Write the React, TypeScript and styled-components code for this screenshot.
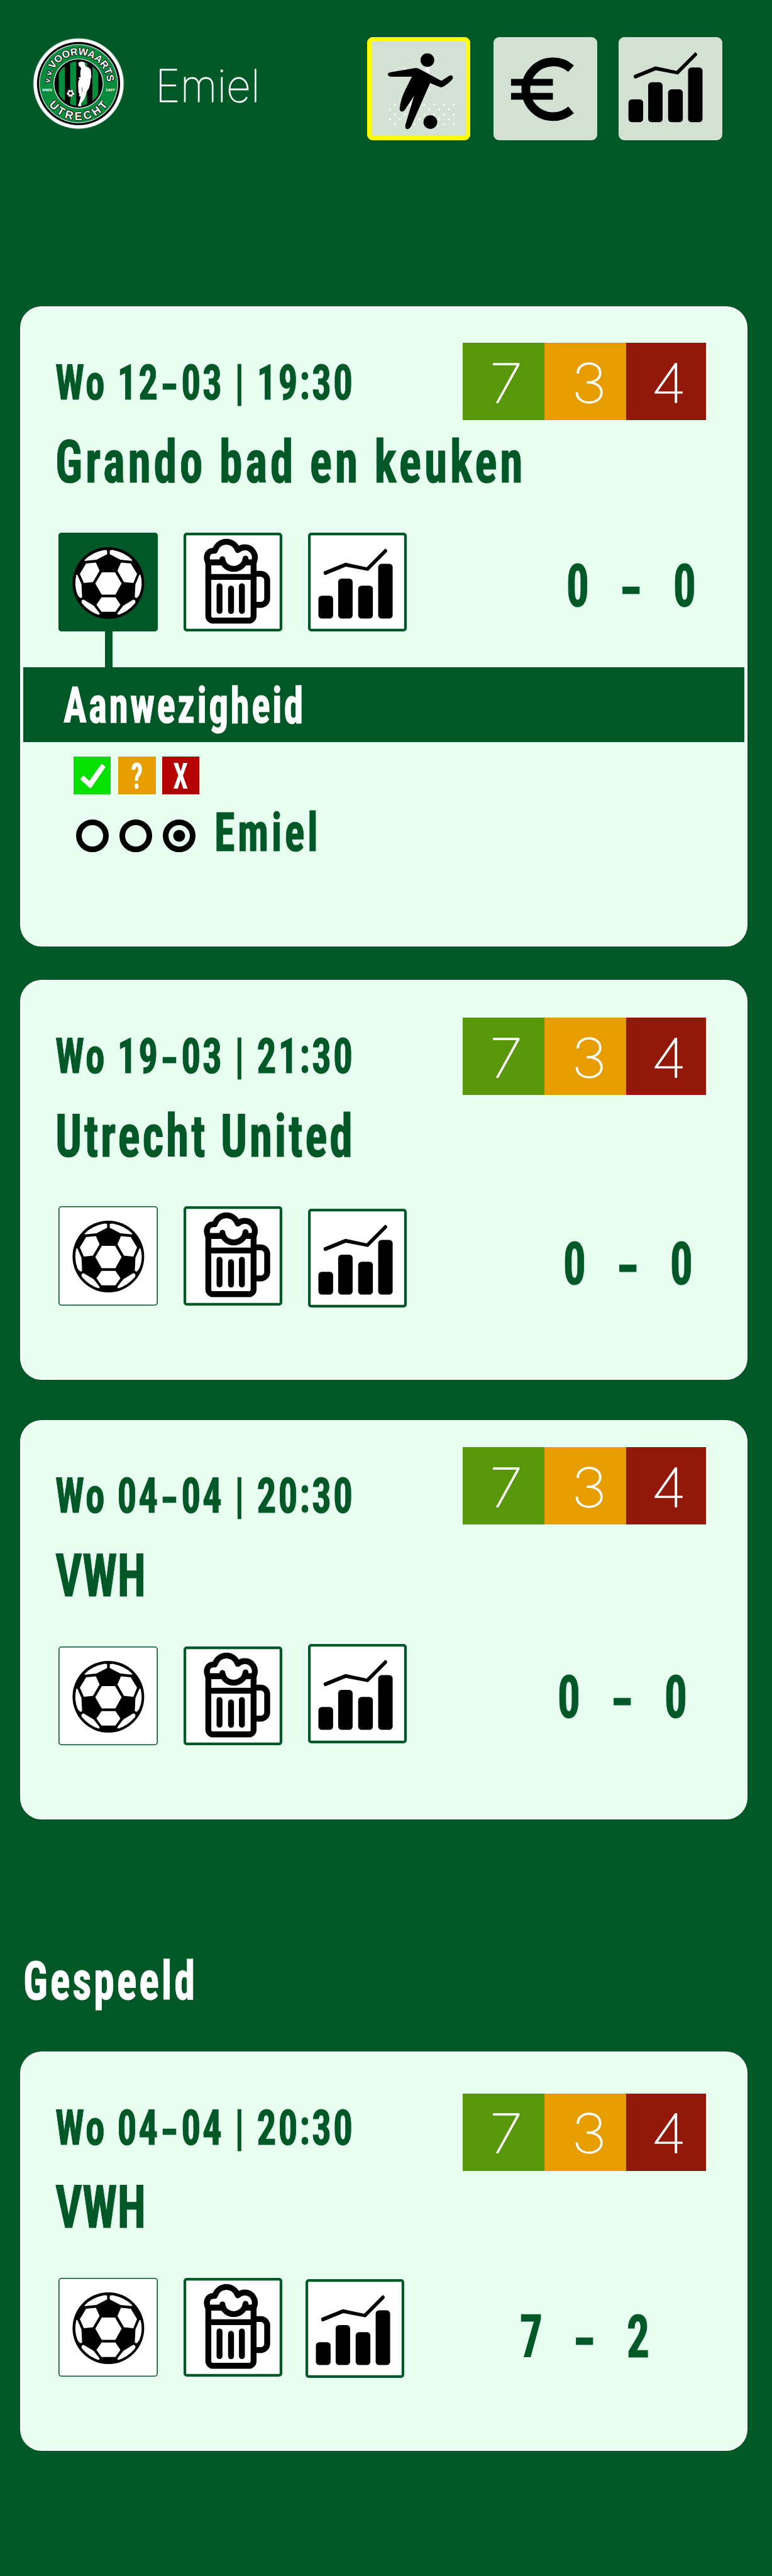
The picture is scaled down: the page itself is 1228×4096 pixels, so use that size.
import React from "react";
import styled, { createGlobalStyle } from "styled-components";

const green = "#005827";
const mint = "#e8fef1";
const condensed = `"Roboto Condensed", "Liberation Sans", sans-serif`;
const thin = `Inter, "Liberation Sans", sans-serif`;

const GlobalStyle = createGlobalStyle`
  * { box-sizing: border-box; }
  body { margin: 0; background: ${green}; }
`;

const Page = styled.main`
  width: 1228px;
  height: 4096px;
  background: ${green};
  color: ${green};
  font-family: ${condensed};
  overflow: hidden;
`;

/* ---------- text ---------- */

const Label = styled.span<{ $size: number; $tracking: number }>`
  display: block;
  font-family: ${condensed};
  font-weight: 700;
  font-size: ${(p) => p.$size}px;
  line-height: 1;
  letter-spacing: ${(p) => p.$tracking}px;
  white-space: nowrap;
  -webkit-text-stroke: 1px currentColor;
  transform: scaleX(0.78);
  transform-origin: 0 50%;
`;

const DateDash = styled.span`
  display: inline-block;
  width: 39.7px;
  margin-right: 3.8px;
  letter-spacing: 0;
  text-align: center;
  transform: translateY(3px) scaleX(1.4);
`;

/* ---------- header ---------- */

const Header = styled.header`
  display: flex;
  align-items: flex-start;
  height: 487px;
  padding: 48px 79.4px 0 42px;
`;

const LogoSvg = styled.svg`
  flex: none;
  width: 167.9px;
  height: 167.9px;
`;

const UserName = styled.span`
  margin: 54.4px 0 0 37.6px;
  font-family: ${thin};
  font-weight: 100;
  font-size: 70.7px;
  line-height: 1;
  color: #fff;
  -webkit-text-stroke: 1.1px #fff;
  transform: scaleX(0.96);
  transform-origin: 0 50%;
`;

const Nav = styled.nav`
  display: grid;
  grid-template-columns: 201.7px 198.9px 164.3px;
  margin: 10.8px 0 0 auto;
`;

const NavButton = styled.button<{ $active?: boolean }>`
  width: 164.3px;
  height: 164.3px;
  padding: 0;
  border: 0;
  border-radius: 9px;
  background: #d3e1d3;
  box-shadow: ${(p) => (p.$active ? "inset 0 0 0 7px #ffff00" : "none")};
`;

const Icon = styled.svg`
  display: block;
  width: 100%;
  height: 100%;
`;

/* ---------- match card ---------- */

const Card = styled.section<{ $height: number; $gap: number }>`
  display: flex;
  flex-direction: column;
  width: 1156.8px;
  height: ${(p) => p.$height}px;
  margin: ${(p) => p.$gap}px 0 0 32.4px;
  border: 2px solid #fff;
  border-radius: 34.5px;
  background: ${mint};
`;

const CardTop = styled.div`
  display: flex;
  flex: none;
  align-items: flex-start;
  height: 358.2px;
  padding-right: 64.1px;
`;

const Heading = styled.div`
  display: flex;
  flex: 1 1 0;
  flex-direction: column;
  gap: 41.1px;
  min-width: 0;
  padding: 79.8px 0 0 53.9px;
`;

const Badges = styled.div<{ $top: number }>`
  display: grid;
  flex: none;
  grid-template-columns: 130.1px 130.1px 127px;
  height: 122.9px;
  margin-top: ${(p) => p.$top}px;
`;

const Badge = styled.div<{ $color: string; $inset: number }>`
  padding: 21.6px 0 0 ${(p) => p.$inset}px;
  background: ${(p) => p.$color};
`;

const BadgeDigit = styled.span`
  display: block;
  font-family: ${thin};
  font-weight: 100;
  font-size: 85.7px;
  line-height: 1;
  color: #fff;
  -webkit-text-stroke: 1.4px #fff;
  transform: scaleX(1.12);
  transform-origin: 0 50%;
`;

const Actions = styled.div<{ $end: number }>`
  display: flex;
  flex: none;
  align-items: flex-start;
  gap: 41px;
  height: 157.2px;
  padding: 0 ${(p) => p.$end}px 0 59.1px;
`;

const ActionButton = styled.button<{ $line: number; $active?: boolean; $dx?: number; $dy?: number }>`
  flex: none;
  width: 157.2px;
  height: 157.2px;
  margin: ${(p) => p.$dy ?? 0}px 0 0 ${(p) => p.$dx ?? 0}px;
  padding: 0;
  border: 0;
  border-radius: 5px;
  background: ${(p) => (p.$active ? green : "#fff")};
  box-shadow: inset 0 0 0 ${(p) => p.$line}px ${green};
`;

const Score = styled.div<{ $top: number }>`
  display: grid;
  grid-template-columns: repeat(3, 28.3px);
  gap: 56.7px;
  justify-items: center;
  margin: ${(p) => p.$top}px 0 0 auto;
  font-weight: 700;
  font-size: 94.6px;
  line-height: 1;
  -webkit-text-stroke: 1px currentColor;
`;

const Goals = styled.span`
  transform: scaleX(0.76);
`;

const ScoreDash = styled.span`
  transform: translateY(4px) scaleX(1.16);
`;

/* ---------- attendance ---------- */

const Connector = styled.div`
  flex: none;
  width: 12px;
  height: 56.6px;
  margin-left: 132.9px;
  background: ${green};
`;

const SectionBar = styled.div`
  flex: none;
  height: 119.5px;
  margin: 0 3.7px 0 2.6px;
  padding: 21.8px 0 0 64.1px;
  background: ${green};
  color: #fff;
`;

const Statuses = styled.div`
  display: grid;
  flex: none;
  grid-template-columns: 71.5px 69.6px 59.3px;
  margin: 23px 0 0 82.5px;
`;

const Status = styled.div<{ $color: string }>`
  display: flex;
  justify-content: center;
  width: 59.3px;
  height: 59.4px;
  background: ${(p) => p.$color};
  color: #fff;
  font-weight: 700;
  font-size: 57.7px;
  line-height: 1;
`;

const StatusMark = styled.span`
  padding-top: 2.8px;
  transform: scaleX(0.74);
`;

const PlayerRow = styled.div`
  display: flex;
  flex: none;
  gap: 17.3px;
  margin: 19.4px 0 0 86.3px;
`;

const Radio = styled.span<{ $checked?: boolean }>`
  flex: none;
  width: 52px;
  height: 52px;
  margin-top: 20.3px;
  border: 9.6px solid #000;
  border-radius: 50%;
  background: ${(p) => (p.$checked ? "radial-gradient(circle, #000 9px, transparent 9.8px)" : "transparent")};
`;

const PlayerName = styled.div`
  margin-left: 12.2px;
`;

const SectionTitle = styled.h2`
  height: 368.8px;
  margin: 0;
  padding: 215px 0 0 37.4px;
  color: #fff;
`;

/* ---------- drawings ---------- */

const Logo = () => (
  <LogoSvg viewBox="0 0 840 840">
    <defs>
      <path id="topArc" d="M187 425 A228 228 0 0 1 643 425" />
      <path id="bottomArc" d="M125 425 A290 290 0 0 0 705 425" />
      <clipPath id="inner"><circle cx="415" cy="425" r="178" /></clipPath>
    </defs>
    <circle cx="415" cy="425" r="363" fill="#fff" opacity=".3" />
    <circle cx="415" cy="425" r="358" fill="#fff" />
    <circle cx="415" cy="425" r="331" fill="#000" />
    <circle cx="415" cy="425" r="314" fill="#fff" />
    <circle cx="415" cy="425" r="309" fill="#078c3e" />
    <circle cx="415" cy="425" r="199" fill="#fff" />
    <circle cx="415" cy="425" r="193" fill="#000" />
    <g clipPath="url(#inner)" fill="#078c3e">
      <path d="M258 230h47v400h-47zM348 230h47v400h-47zM436 230h47v400h-47zM525 230h47v400h-47z" />
    </g>
    <path
      fill="#fff"
      d="M414 262C420 250 446 247 458 255C468 263 464 276 473 290C490 292 508 300 513 320L517 370C514 384 507 392 509 408C510 425 502 440 500 455C493 474 481 482 476 500C474 520 466 536 457 555L436 580C432 590 438 600 434 606C424 608 414 606 411 600C412 586 421 578 422 566C426 552 430 540 431 528L417 524L423 512C414 496 412 482 414 466C410 446 412 424 414 404L424 390L416 387L417 376L432 374C428 352 427 330 435 308L431 294C418 290 412 276 414 262Z"
    />
    <path d="M444 448L447 500L441 470Z" fill="#000" />
    <circle cx="351" cy="502" r="29" fill="#fff" />
    <circle cx="351" cy="502" r="12" fill="#000" />
    <path d="M341 473h19l-9 8zM321 496l10-14 3 12zM372 482l9 14-13-2zM325 516l12 1-4 11zM377 516l-12 1 5 11zM345 531l6-8 6 8z" fill="#000" />
    <g fill="#fff" stroke="#000" strokeWidth="9" paintOrder="stroke" strokeLinejoin="round" fontFamily="Liberation Sans, sans-serif" fontWeight="700">
      <text fontSize="80">
        <textPath href="#topArc" startOffset="3"><tspan fontSize="62" letterSpacing="5">v.v.</tspan><tspan letterSpacing="0.6">VOORWAARTS</tspan></textPath>
      </text>
      <text fontSize="90" textAnchor="middle" letterSpacing="20">
        <textPath href="#bottomArc" startOffset="51%">UTRECHT</textPath>
      </text>
    </g>
    <g fill="#fff" fontFamily="Liberation Sans, sans-serif" fontWeight="700" fontSize="30" textAnchor="middle">
      <text x="165" y="484" textLength="80" lengthAdjust="spacingAndGlyphs">SINDS</text>
      <text x="667" y="484" textLength="76" lengthAdjust="spacingAndGlyphs">1907</text>
    </g>
  </LogoSvg>
);

const sparkles = [
  [165, 652], [228, 640], [284, 652], [324, 652], [364, 652], [404, 652],
  [145, 690], [304, 690], [344, 690], [384, 690],
  [165, 730], [205, 730], [284, 730], [324, 730], [364, 730], [404, 730],
  [145, 768], [185, 768], [265, 768], [344, 768], [384, 768],
  [165, 807], [245, 807], [364, 807], [404, 807], [205, 365], [304, 535],
];

const PlayerIcon = () => (
  <Icon viewBox="52 114 420 822" preserveAspectRatio="none">
    <defs>
      <pattern id="dots" x="130" y="215" width="13.3" height="39" patternUnits="userSpaceOnUse">
        <path d="M7.5 1h3v8h-3zM.5 20h3v8h-3z" fill="#e6ebe6" />
      </pattern>
    </defs>
    <rect x="130" y="215" width="278" height="662" fill="url(#dots)" />
    {sparkles.map(([x, y]) => (
      <path key={`${x}-${y}`} d={`M${x} ${y - 14}l2 11 5 3-5 3-2 11-2-11-5-3 5-3z`} fill="#fff" />
    ))}
    <path d="M289 350h17v55l-17-28zM243 580l-22 78 10 12z" fill="#f4f6f4" />
    <ellipse cx="297" cy="297" rx="28" ry="54" />
    <ellipse cx="309" cy="790" rx="28" ry="54" />
    <path d="M146 394L246 361C254 360 260 362 267 370L354 462L387 421C395 410 404 428 400 444C394 464 378 488 362 508C356 516 350 514 345 509L308 479L232 818C228 836 222 847 214 846C207 844 206 828 208 810L243 580L206 690C200 708 192 711 187 700C183 692 184 680 185 668C190 610 200 560 210 522L234 429H152C144 430 137 424 136 412C136 402 140 396 146 394Z" />
  </Icon>
);

const EuroIcon = () => (
  <Icon viewBox="0 0 273.7 274" fill="none" stroke="#000">
    <path d="M205.6 83.6A72.5 72.5 0 1 0 205.6 193" strokeWidth="23" />
    <path d="M46.4 120H157.4M46.4 157H157.4" strokeWidth="18" />
  </Icon>
);

const ChartIcon = ({ box = "1062 99 410 786" }: { box?: string }) => (
  <Icon viewBox={box} preserveAspectRatio="none">
    <rect x="1105" y="600" width="61" height="182" rx="14" ry="27" />
    <rect x="1187" y="464" width="60" height="318" rx="14" ry="27" />
    <rect x="1270" y="520" width="61" height="262" rx="14" ry="27" />
    <rect x="1353" y="346" width="60" height="436" rx="14" ry="27" />
    <path d="M1129 407L1217 338L1305 374L1379 232Q1383 221 1387 232Q1393 240 1390 250L1311 403L1219 369L1134 435Q1129 435 1127 425Q1125 414 1129 407Z" />
  </Icon>
);

const BallIcon = () => (
  <Icon viewBox="0 27 786 786">
    <circle cx="397" cy="427" r="285" />
    <path
      fill="#fff"
      d="M345 342H450L502 431L453 519H344L293 431ZM343 541H453L493 599L453 656H342L302 599ZM220 272L298 264L327 330L274 420L202 427L170 354ZM575 272L497 264L469 330L521 420L596 427L625 354ZM365 165Q387 165 387 172V198L302 242L215 251Q204 250 209 243Q270 183 365 165ZM430 165Q408 166 408 172V198L493 242L581 251Q590 249 586 243Q525 183 430 165ZM142 362Q150 360 153 367L183 437L188 541L174 547Q158 535 151 520Q122 445 142 362ZM653 362Q646 360 642 367L612 437L607 541L622 547Q637 535 644 520Q675 445 653 362ZM183 568L198 558L280 607L327 667Q326 680 319 680Q245 657 188 590Q183 580 183 568ZM612 568L597 558L516 607L469 667Q470 680 477 680Q550 657 608 590Q612 580 612 568Z"
    />
  </Icon>
);

const BeerIcon = () => (
  <Icon viewBox="27 27 786 786" fill="none" stroke="#000" strokeWidth="47" strokeLinecap="round" strokeLinejoin="round">
    <path d="M224 263V688A38 38 0 0 0 262 726H546A38 38 0 0 0 584 688V263" />
    <path d="M224 379H584M224 263H340M524 263H584" />
    <path d="M221 262C200 215 218 170 268 170H275C292 123 328 99 367 99C407 99 442 123 458 165C476 150 496 143 514 143C570 143 612 200 586 262" />
    <path d="M336 238C342 288 382 315 425 315C474 315 515 280 520 233" />
    <path d="M607 354H640A52 52 0 0 1 692 406V549A52 52 0 0 1 640 601H607" strokeLinecap="butt" />
    <path d="M313 453V649M404.5 472V650M491 453V649" />
  </Icon>
);

const CheckIcon = () => (
  <Icon viewBox="0 0 59.3 59.4">
    <path d="M12.5 36L15.8 32L25.2 41L45 13.5L49 16.7L26.8 49Z" fill="#fff" stroke="#fff" strokeWidth="3" strokeLinejoin="round" />
  </Icon>
);

/* ---------- composition ---------- */

interface Match {
  day: [string, string];
  team: string;
  tracking: number;
  score: [string, string];
  height: number;
  gap: number;
  badgeTop: number;
  scoreTop: number;
  scoreEnd: number;
  chart: [number, number];
  open?: boolean;
}

const upcoming: Match[] = [
  { day: ["Wo 12", "03 | 19:30"], team: "Grando bad en keuken", tracking: 6.06, score: ["0", "0"], height: 1018.2, gap: 0, badgeTop: 56.2, scoreTop: 38.2, scoreEnd: 83.7, chart: [0, 0], open: true },
  { day: ["Wo 19", "03 | 21:30"], team: "Utrecht United", tracking: 4.7, score: ["0", "0"], height: 635.6, gap: 53.1, badgeTop: 58.1, scoreTop: 45, scoreEnd: 88.7, chart: [0, 3.4] },
  { day: ["Wo 04", "04 | 20:30"], team: "VWH", tracking: 0.5, score: ["0", "0"], height: 635.6, gap: 63.7, badgeTop: 41.8, scoreTop: 34.7, scoreEnd: 97.9, chart: [0, -3.3] },
];

const played: Match[] = [
  { day: ["Wo 04", "04 | 20:30"], team: "VWH", tracking: 0.5, score: ["7", "2"], height: 634.9, gap: 0, badgeTop: 64.9, scoreTop: 46.8, scoreEnd: 158.2, chart: [-4.1, 2] },
];

const Attendance = () => (
  <>
    <Connector />
    <SectionBar><Label $size={79.1} $tracking={4.2}>Aanwezigheid</Label></SectionBar>
    <Statuses>
      <Status $color="#05e000"><CheckIcon /></Status>
      <Status $color="#e69d00"><StatusMark>?</StatusMark></Status>
      <Status $color="#b50000"><StatusMark>X</StatusMark></Status>
    </Statuses>
    <PlayerRow>
      <Radio />
      <Radio />
      <Radio $checked />
      <PlayerName><Label $size={85.2} $tracking={5.6}>Emiel</Label></PlayerName>
    </PlayerRow>
  </>
);

const MatchCard = ({ match: m }: { match: Match }) => (
  <Card $height={m.height} $gap={m.gap}>
    <CardTop>
      <Heading>
        <Label $size={78.6} $tracking={3.75}>{m.day[0]}<DateDash>-</DateDash>{m.day[1]}</Label>
        <Label $size={94.6} $tracking={m.tracking}>{m.team}</Label>
      </Heading>
      <Badges $top={m.badgeTop}>
        <Badge $color="#59970a" $inset={42.7}><BadgeDigit>7</BadgeDigit></Badge>
        <Badge $color="#e69d00" $inset={43.2}><BadgeDigit>3</BadgeDigit></Badge>
        <Badge $color="#921909" $inset={38.7}><BadgeDigit>4</BadgeDigit></Badge>
      </Badges>
    </CardTop>
    <Actions $end={m.scoreEnd}>
      <ActionButton $line={1.6} $active={m.open}><BallIcon /></ActionButton>
      <ActionButton $line={4.2}><BeerIcon /></ActionButton>
      <ActionButton $line={4.2} $dx={m.chart[0]} $dy={m.chart[1]}><ChartIcon /></ActionButton>
      <Score $top={m.scoreTop}>
        <Goals>{m.score[0]}</Goals>
        <ScoreDash>-</ScoreDash>
        <Goals>{m.score[1]}</Goals>
      </Score>
    </Actions>
    {m.open && <Attendance />}
  </Card>
);

export default function App() {
  return (
    <Page>
      <GlobalStyle />
      <Header>
        <Logo />
        <UserName>Emiel</UserName>
        <Nav>
          <NavButton $active><PlayerIcon /></NavButton>
          <NavButton><EuroIcon /></NavButton>
          <NavButton><ChartIcon box="1064 105 429.6 822" /></NavButton>
        </Nav>
      </Header>
      {upcoming.map((m, i) => <MatchCard key={i} match={m} />)}
      <SectionTitle><Label $size={85.2} $tracking={4.8}>Gespeeld</Label></SectionTitle>
      {played.map((m, i) => <MatchCard key={i} match={m} />)}
    </Page>
  );
}
